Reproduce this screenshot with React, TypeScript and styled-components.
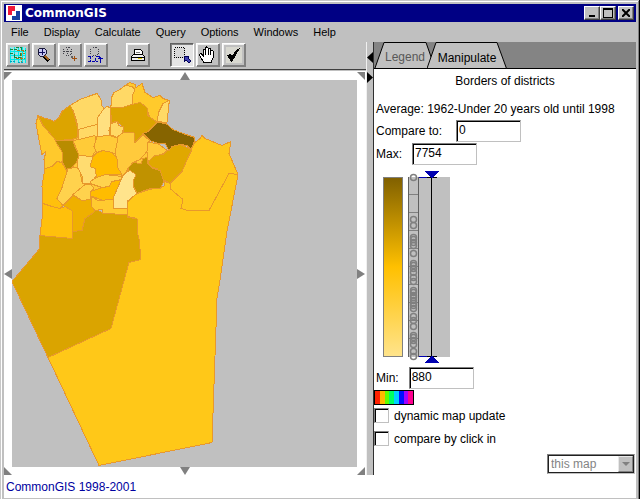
import React from "react";
import styled, { createGlobalStyle, css } from "styled-components";

const GlobalStyle = createGlobalStyle`
  * { box-sizing: border-box; }
  body { margin: 0; background: #c0c0c0; }
  body, button, input, select {
    font-family: "Liberation Sans", Arial, sans-serif;
    font-size: 12px;
    line-height: 14px;
    color: #000;
  }
  button { border: 0; padding: 0; margin: 0; background: none; }
  svg { display: block; }
`;

const raised = css`
  border: 1px solid;
  border-color: #fff #404040 #404040 #fff;
  box-shadow: inset -1px -1px 0 #808080;
`;

const Window = styled.div`
  display: flex;
  flex-direction: column;
  min-height: 100vh;
  padding: 4px;
  background: #c0c0c0;
  box-shadow: inset -1px -1px 0 #000, inset 1px 1px 0 #c8c8c8,
    inset -2px -2px 0 #808080, inset 2px 2px 0 #fff;
`;

const TitleBar = styled.header`
  display: flex;
  align-items: center;
  height: 18px;
  padding: 0 2px;
  background: #000084;
`;

const Title = styled.h1`
  flex: 1;
  margin: 0 0 0 3px;
  font-family: "DejaVu Sans", sans-serif;
  font-size: 12px;
  font-weight: bold;
  color: #fff;
`;

const CaptionButton = styled.button<{ $apart?: boolean }>`
  ${raised}
  display: grid;
  place-items: center;
  width: 16px;
  height: 14px;
  margin-left: ${(p) => (p.$apart ? "2px" : "0")};
  background: #c0c0c0;
`;

const MenuBar = styled.nav`
  display: flex;
  align-items: center;
  gap: 15px;
  height: 20px;
  padding: 0 7px;
`;

const MenuItem = styled.button`
  font-size: 11px;
`;

const Body = styled.main`
  flex: 1;
  display: grid;
  grid-template-columns: minmax(0, 362fr) 8px minmax(0, 262fr);
`;

const MapColumn = styled.section`
  display: flex;
  flex-direction: column;
`;

const Toolbar = styled.div`
  display: flex;
  height: 28px;
  padding: 1px 2px 2px;
  gap: 2px;
  border-bottom: 1px solid #404040;
`;

const ToolGroup = styled.div<{ $before?: number }>`
  display: flex;
  gap: 2px;
  margin-left: ${(p) => p.$before || 0}px;
`;

const ToolButton = styled.button<{ $pressed?: boolean }>`
  width: 24px;
  height: 24px;
  border: 1px solid;
  border-color: ${(p) => (p.$pressed ? "#606060 #fff #fff #606060" : "#fff #808080 #808080 #fff")};
  background: ${(p) => (p.$pressed ? "#e4e4e4" : "#c0c0c0")};
  box-shadow: ${(p) =>
    p.$pressed ? "inset 1px 1px 0 #808080" : "inset -1px -1px 0 #808080, inset 1px 1px 0 #f0f0f0"};
`;

const MapFrame = styled.div`
  flex: 1;
  display: grid;
  grid-template-columns: 8px minmax(0, 1fr) 9px;
  grid-template-rows: 9px minmax(384px, 1fr) 8px;
  margin-top: 1px;
  background: #fff;
  & > svg { place-self: center; }
`;

const PanButton = styled.button<{ $align: string }>`
  display: grid;
  place-items: ${(p) => p.$align};
`;

const MapCanvas = styled.div`
  display: grid;
  background: #c0c0c0;
  & > svg { width: 100%; height: 100%; }
`;

const Divider = styled.div`
  display: flex;
  flex-direction: column;
  align-items: flex-end;
  gap: 9px;
  padding-top: 10px;
  background: #c0c0c0;
  border-left: 1px solid #f0f0f0;
  border-right: 1px solid #303030;
`;

const SidePanel = styled.section`
  display: flex;
  flex-direction: column;
  background: #fff;
`;

const TabStrip = styled.div`
  display: flex;
  height: 27px;
  background: #848484;
  border-bottom: 1px solid #000;
`;

const Tab = styled.button<{ $active?: boolean }>`
  position: relative;
  z-index: ${(p) => (p.$active ? 1 : 0)};
  width: ${(p) => (p.$active ? "80px" : "62px")};
  height: 27px;
  margin-left: ${(p) => (p.$active ? "-9px" : "0")};
  padding: ${(p) => (p.$active ? "5px 0 0" : "2px 0 0")};
  color: ${(p) => (p.$active ? "#000" : "#585858")};
  & > svg { position: absolute; left: 0; top: 0; }
  & > span { position: relative; }
`;

const Content = styled.div`
  display: flex;
  flex-direction: column;
  align-items: flex-start;
  flex: 1;
  padding: 5px 0 1px;
`;

const Heading = styled.h2`
  align-self: center;
  margin: 0 0 14px;
  font-size: 12px;
  font-weight: normal;
`;

const Summary = styled.p`
  margin: 0 0 4px 2px;
`;

const Field = styled.label<{ $gap: number }>`
  display: flex;
  align-items: center;
  gap: ${(p) => p.$gap}px;
  height: 22px;
  margin: 0 0 1px 2px;
`;

const TextBox = styled.input`
  width: 65px;
  height: 22px;
  padding: 0 2px 2px;
  border: 1px solid;
  border-color: #808080 #c0c0c0 #c0c0c0 #808080;
  box-shadow: inset 1px 1px 0 #000;
  background: #fff;
  border-radius: 0;
  outline: 0;
`;

const Chart = styled.svg`
  margin: 4px 0 3px 9px;
`;

const ColourButton = styled.button`
  display: flex;
  width: 40px;
  height: 15px;
  border: 1px solid #000;
  margin-bottom: 3px;
`;

const Swatch = styled.span<{ $colour: string }>`
  flex: 1;
  height: 13px;
  background: ${(p) => p.$colour};
`;

const Check = styled.label`
  display: flex;
  align-items: center;
  gap: 5px;
  margin-bottom: 8px;
`;

const CheckBox = styled.input`
  appearance: none;
  width: 15px;
  height: 15px;
  margin: 0;
  border: 1px solid;
  border-color: #808080 #c0c0c0 #c0c0c0 #808080;
  box-shadow: inset 1px 1px 0 #000;
  background: #fff;
`;

const Choice = styled.div`
  position: relative;
  align-self: flex-end;
  width: 88px;
  height: 20px;
  margin: auto 1px 0 0;
`;

const Select = styled.select`
  appearance: none;
  width: 100%;
  height: 100%;
  padding: 0 20px 0 3px;
  border: 1px solid;
  border-color: #808080 #c0c0c0 #c0c0c0 #808080;
  border-radius: 0;
  box-shadow: inset 0 0 0 1px #202020;
  background: #fff;
  color: #848484;
  opacity: 1;
`;

const SelectArrow = styled.span`
  position: absolute;
  right: 2px;
  top: 2px;
  display: grid;
  place-items: center;
  width: 15px;
  height: 16px;
  background: #c0c0c0;
  border: 1px solid;
  border-color: #e8e8e8 #808080 #808080 #e8e8e8;
  pointer-events: none;
`;

const StatusBar = styled.footer`
  height: 23px;
  padding: 5px 2px;
  background: #fff;
  color: #0000a0;
`;

const districts: [string, string][] = [
  ["#ffc818", "238,173 227,230 219,285 217,297 212,441 99,464 48,356 111,327 129,261 141,258 139,237 137,230 137,217 127,215 127,201 137,192 150,188 164,185 165,180 170,182 170,187 183,198 181,207 188,209 209,209 229,172"],
  ["#daa400", "40,234 72,237 72,230 82,229 85,217 97,208 103,212 127,213 127,216 137,217 137,230 139,237 141,258 129,261 111,327 48,356 12,280 39,248"],
  ["#ffc81c", "191,148 195,141 200,137 202,134 205,137 222,144 231,140 229,152 238,173 229,172 209,209 188,209 181,207 183,198 170,187 170,182 182,170 188,155"],
  ["#dca400", "38,114 45,117 50,118 54,120 59,116 62,110 70,104 73,109 77,124 78,136 72,138 56,139 43,124"],
  ["#ffd966", "70,104 80,98 91,94 97,92 101,98 101,103 104,107 97,117 97,123 78,128 77,121 73,109"],
  ["#ffd966", "78,128 97,123 97,136 79,138"],
  ["#ffe080", "104,107 107,105 110,106 111,122 109,129 110,134 97,135 97,117"],
  ["#ffd966", "111,104 111,97 114,91 120,88 125,84 132,85 135,88 132,95 132,103 122,106 110,106"],
  ["#ffca2c", "125,84 130,81 135,83 136,86 142,82 145,91 153,96 160,94 163,97 169,99 163,102 157,120 150,117 147,108 145,106 140,101 132,103 132,95 135,88 132,85"],
  ["#ffd966", "169,99 169,102 167,121 157,120 159,110 163,102"],
  ["#dca400", "110,106 122,106 132,103 140,101 147,106 148,114 157,121 148,130 143,132 140,136 135,141 134,131 123,131 124,126 117,120 112,121"],
  ["#ffd966", "111,122 117,120 119,124 124,126 122,132 117,136 110,133"],
  ["#ffca3c", "118,135 123,131 134,131 135,141 140,136 143,134 150,139 148,141 147,150 140,158 133,161 128,168 122,175 117,165 117,157 115,152"],
  ["#ffca3c", "148,141 158,142 167,149 162,153 155,155 148,160 147,150"],
  ["#e0a800", "148,160 155,154 163,153 169,148 172,145 180,143 192,148 188,156 182,170 170,182 163,178 157,167 150,165"],
  ["#c09200", "128,167 133,161 141,162 143,157 147,156 148,162 153,167 160,169 164,180 160,187 150,187 137,192 133,183 134,174"],
  ["#866400", "143,132 148,130 157,121 166,122 173,128 183,132 195,136 194,141 191,148 187,144 180,143 172,145 169,149 165,142 158,142 150,139"],
  ["#ffc92c", "38,114 43,124 56,139 63,151 62,161 57,160 52,165 45,167 44,158 46,150 42,153 38,133 36,122"],
  ["#b88c00", "55,139 73,139 75,145 79,154 77,160 73,165 70,167 68,171 62,160 63,152"],
  ["#ffc00c", "45,167 52,165 57,160 62,161 68,172 62,186 57,197 63,204 60,207 52,205 43,202 42,185"],
  ["#ffc00c", "43,202 52,205 60,207 65,205 72,209 72,237 40,234 42,218"],
  ["#ffd24d", "68,167 77,166 80,170 82,180 85,183 73,195 63,204 57,197 62,186"],
  ["#ffdc70", "77,160 79,154 93,155 90,165 96,167 96,175 90,182 83,182 82,174 78,167"],
  ["#ffcb38", "73,139 79,138 95,134 97,147 92,155 79,154"],
  ["#ffcb38", "97,135 110,134 118,137 115,152 108,150 97,152 94,145"],
  ["#ffbc00", "90,165 93,155 97,151 103,149 112,151 117,157 117,165 122,173 105,173 97,178 95,167"],
  ["#ffd24d", "90,180 97,176 105,173 122,175 122,178 112,180 109,185 102,186 90,182"],
  ["#ffbc00", "90,190 103,186 109,185 112,180 122,178 113,198 103,199 90,194"],
  ["#ffd24d", "73,193 85,183 91,183 94,187 90,191 90,198 82,199"],
  ["#efb000", "63,204 73,194 82,199 91,198 92,205 95,210 85,217 82,229 72,230 72,209"],
  ["#ffcb30", "91,195 98,199 113,198 113,207 127,207 127,213 103,212 102,208 95,209 91,204"],
  ["#ffe48c", "122,176 127,170 130,169 136,173 133,180 133,185 137,192 127,200 127,207 113,207 113,197"],
];

const samples = [176, 218, 224, 236, 238, 241, 244, 252, 262, 264, 267, 271, 276, 280, 289, 291, 294, 296, 299, 302, 304, 307, 315, 319, 325, 334, 336, 339, 343, 350, 355];
const ticks = [193, 211, 229, 247, 265, 283, 301, 319, 337];
const rainbow = ["#ff2000", "#ffb800", "#60ff00", "#00ff60", "#00d0ff", "#0010ff", "#a000ff", "#ff0090"];

function Icon({ children }: { children: React.ReactNode }) {
  return (
    <svg width="22" height="22" viewBox="1 1 22 22" fill="none" shapeRendering="crispEdges" aria-hidden="true">
      {children}
    </svg>
  );
}

const GridIcon = () => (
  <Icon>
    <rect x="4" y="4" width="16" height="16" fill="#9ce4e4" />
    <path d="M4 8.5h16M4 12.5h16M4 16.5h16M8.5 4v16M12.5 4v16M16.5 4v16M4.5 5v15M19.5 5v15" stroke="#00e8e8" />
    <path d="M4 6.5h6v-2h5v3h5M4 10.5h4v4h6v-5" stroke="#108840" strokeDasharray="3 1" />
    <path d="M11 7.5h6v3h3M15.5 10v9M10 15.5h9" stroke="#a08020" strokeDasharray="3 1" />
    <path d="M4 18.5h5M12 19.5h5" stroke="#00a0c0" strokeDasharray="2 1" />
  </Icon>
);

const ZoomIcon = () => (
  <Icon>
    <path d="M12 13l5 5" stroke="#000" strokeWidth="4" />
    <path d="M13 13l4 4" stroke="#a06020" strokeWidth="2" />
    <path d="M8 5h4l2 2v4l-2 2H8l-2-2V7z" fill="#c8c8f0" stroke="#181838" />
    <path d="M10.5 6v6M7 9.5h6" stroke="#101060" />
  </Icon>
);

const ZoomPointIcon = () => (
  <Icon>
    <path d="M7.5 4.5h4l2 2v4l-2 2h-4l-2-2v-4z" stroke="#404048" strokeDasharray="1 1" />
    <path d="M9.5 6v6M6 8.5h7" stroke="#404048" strokeDasharray="1 1" />
    <path d="M13 13h2v2h-2z" fill="#606060" />
    <path d="M16.5 13v5M14 15.5h5" stroke="#a05010" />
  </Icon>
);

const ZoomAreaIcon = () => (
  <Icon>
    <path d="M8.5 4.5h4l2 2v4l-2 2h-4l-2-2v-4z" stroke="#404048" strokeDasharray="1 1" />
    <path d="M4 13.5h5M6.5 13v6M4 18.5h10M11.5 15v4" stroke="#0000b0" strokeDasharray="3 1" />
    <path d="M11.5 13.5h4l1 2v4M14 15.5h5" stroke="#0000b0" />
  </Icon>
);

const PrintIcon = () => (
  <Icon>
    <path d="M8.5 12V6.5h6l2 2V12" fill="#fff" stroke="#000" />
    <path d="M10 9.5h4" stroke="#808080" />
    <path d="M5.5 17.5v-4l2-2h9l2 2v4z" fill="#f0f0f0" stroke="#000" />
    <path d="M6 14.5h12" stroke="#000" />
    <path d="M12 15.5h4" stroke="#e0d000" />
  </Icon>
);

const SelectIcon = () => (
  <Icon>
    <rect x="4.5" y="4.5" width="10" height="10" fill="#d8d8d8" stroke="#000" strokeDasharray="1 1" />
    <path d="M14 13h5l-1 2 3 3-2 2-3-3-2 2z" fill="#4040b0" stroke="#000058" />
  </Icon>
);

const HandIcon = () => (
  <Icon>
    <path
      d="M8 19.5L4.5 14.5l-1-3 1.500-1 2 2V7l1-1 1.500 1V5l1-1L12 5v1l1-1 1.500 1v2L16 7l1 1v7l-2 4.500z"
      fill="#fff"
      stroke="#000"
    />
    <path d="M9.5 7v5M12.500 6v6M14.500 8v4" stroke="#000" />
  </Icon>
);

const CheckIcon = () => (
  <Icon>
    <rect x="4" y="4" width="16" height="16" fill="#d8d8d0" />
    <path d="M5 12l4-1 1 2 5-7 3-1-8 14H9z" fill="#000" />
  </Icon>
);

function Arrow({ w, h, points, fill = "#808080" }: { w: number; h: number; points: string; fill?: string }) {
  return (
    <svg width={w} height={h} viewBox={`0 0 ${w} ${h}`} aria-hidden="true">
      <polygon points={points} fill={fill} />
    </svg>
  );
}

function DistrictMap() {
  return (
    <MapCanvas>
      <svg viewBox="12 80 345 384" shapeRendering="crispEdges" role="img" aria-label="Borders of districts">
        <polygon fill="#ffcb30" points="38,114 70,104 97,92 111,104 132,81 169,99 194,140 170,185 127,215 43,230" opacity="0" />
        <polygon fill="#ffca38" points="56,137 97,125 150,135 148,180 130,200 80,212 60,200" />
        {districts.map(([fill, points]) => (
          <polygon key={points} fill={fill} points={points} stroke="#e8982c" strokeLinejoin="round" />
        ))}
      </svg>
    </MapCanvas>
  );
}

function ValueScale() {
  return (
    <Chart width="70" height="194" viewBox="383 169 70 194" shapeRendering="crispEdges" role="img" aria-label="Value scale">
      <defs>
        <linearGradient id="scale" x1="0" y1="0" x2="0" y2="1">
          <stop offset="0" stopColor="#806000" />
          <stop offset="0.5" stopColor="#ffc000" />
          <stop offset="1" stopColor="#ffe48c" />
        </linearGradient>
      </defs>
      <rect x="383.500" y="176.500" width="19" height="179" fill="url(#scale)" stroke="#808080" />
      <rect x="408" y="176" width="42" height="180" fill="#c0c0c0" />
      <path d="M408.500 176v180M418.500 176v180" stroke="#606060" />
      {ticks.map((y) => (
        <path key={y} d={`M409 ${y}.500h9`} stroke="#808080" />
      ))}
      <g shapeRendering="auto" fill="none" stroke="#808080" strokeWidth="1.500">
        {samples.map((y) => (
          <circle key={y} cx="413.500" cy={y + 0.5} r="3" />
        ))}
      </g>
      <path d="M419 176.500h8M419 355.500h8" stroke="#0000b0" />
      <path d="M431.500 176v180M427 176.500h10M427 355.500h10" stroke="#000" />
      <path d="M424 170h16l-8 7zM424 362h16l-8-7z" fill="#0000b0" />
    </Chart>
  );
}

export default function App() {
  return (
    <>
      <GlobalStyle />
      <Window>
        <TitleBar>
          <svg width="16" height="16" viewBox="0 0 16 16" aria-hidden="true">
            <path d="M0 0h16v16H0z" fill="#fff" />
            <path d="M2 1h7v5H6v4H2z" fill="#f01838" />
            <path d="M10 6h4v9H6v-4h4z" fill="#1840a0" />
          </svg>
          <Title>CommonGIS</Title>
          <CaptionButton aria-label="Minimize">
            <svg width="10" height="10"><path d="M2 7h6v2H2z" /></svg>
          </CaptionButton>
          <CaptionButton aria-label="Maximize">
            <svg width="10" height="10"><path d="M0 0h10v10H0zM1 2v7h8V2z" fillRule="evenodd" /></svg>
          </CaptionButton>
          <CaptionButton aria-label="Close" $apart>
            <svg width="8" height="8"><path d="M0 0l8 8M8 0L0 8" stroke="#000" strokeWidth="2" /></svg>
          </CaptionButton>
        </TitleBar>
        <MenuBar>
          {["File", "Display", "Calculate", "Query", "Options", "Windows", "Help"].map((m) => (
            <MenuItem key={m}>{m}</MenuItem>
          ))}
        </MenuBar>
        <Body>
          <MapColumn>
            <Toolbar>
              <ToolGroup>
                <ToolButton aria-label="Whole map"><GridIcon /></ToolButton>
                <ToolButton aria-label="Zoom in"><ZoomIcon /></ToolButton>
                <ToolButton aria-label="Zoom to point"><ZoomPointIcon /></ToolButton>
                <ToolButton aria-label="Undo zoom"><ZoomAreaIcon /></ToolButton>
              </ToolGroup>
              <ToolGroup $before={16}>
                <ToolButton aria-label="Print"><PrintIcon /></ToolButton>
              </ToolGroup>
              <ToolGroup $before={18}>
                <ToolButton aria-label="Select area" $pressed><SelectIcon /></ToolButton>
                <ToolButton aria-label="Pan"><HandIcon /></ToolButton>
                <ToolButton aria-label="Pick object"><CheckIcon /></ToolButton>
              </ToolGroup>
            </Toolbar>
            <MapFrame>
              <PanButton aria-label="North-west" $align="end start"><Arrow w={8} h={8} points="0,0 8,0 0,8" /></PanButton>
              <PanButton aria-label="North" $align="end center"><Arrow w={10} h={8} points="5,0 10,8 0,8" /></PanButton>
              <PanButton aria-label="North-east" $align="end start"><Arrow w={8} h={8} points="0,0 8,0 8,8" /></PanButton>
              <PanButton aria-label="West" $align="center start"><Arrow w={8} h={10} points="8,0 8,10 0,5" /></PanButton>
              <DistrictMap />
              <PanButton aria-label="East" $align="center start"><Arrow w={8} h={10} points="0,0 8,5 0,10" /></PanButton>
              <PanButton aria-label="South-west" $align="end start"><Arrow w={8} h={8} points="0,0 8,8 0,8" /></PanButton>
              <PanButton aria-label="South" $align="end center"><Arrow w={10} h={8} points="0,0 10,0 5,8" /></PanButton>
              <PanButton aria-label="South-east" $align="end start"><Arrow w={8} h={8} points="8,0 8,8 0,8" /></PanButton>
            </MapFrame>
          </MapColumn>
          <Divider>
            <button aria-label="Collapse left"><Arrow w={6} h={11} points="6,0 6,11 0,5.500" fill="#000" /></button>
            <button aria-label="Collapse right"><Arrow w={6} h={11} points="0,0 6,5.500 0,11" fill="#000" /></button>
          </Divider>
          <SidePanel>
            <TabStrip role="tablist">
              <Tab role="tab" aria-selected="false">
                <svg width="62" height="26" viewBox="0 0 62 26">
                  <path d="M1 26L10 .5h42L61 26" fill="#c0c0c0" stroke="#000" />
                </svg>
                <span>Legend</span>
              </Tab>
              <Tab role="tab" aria-selected="true" $active>
                <svg width="80" height="27" viewBox="0 0 80 27">
                  <path d="M0 26.500L9 .5h61L79.500 26.500z" fill="#c0c0c0" stroke="#000" />
                </svg>
                <span>Manipulate</span>
              </Tab>
            </TabStrip>
            <Content>
              <Heading>Borders of districts</Heading>
              <Summary>Average: 1962-Under 20 years old until 1998</Summary>
              <Field $gap={14}>Compare to:<TextBox defaultValue="0" /></Field>
              <Field $gap={10}>Max:<TextBox defaultValue="7754" /></Field>
              <ValueScale />
              <Field $gap={10}>Min:<TextBox defaultValue="880" /></Field>
              <ColourButton aria-label="Change colours">
                {rainbow.map((c) => <Swatch key={c} $colour={c} />)}
              </ColourButton>
              <Check><CheckBox type="checkbox" />dynamic map update</Check>
              <Check><CheckBox type="checkbox" />compare by click in</Check>
              <Choice>
                <Select aria-label="Compare by click in" disabled>
                  <option>this map</option>
                </Select>
                <SelectArrow>
                  <Arrow w={8} h={4} points="0,0 8,0 4,4" />
                </SelectArrow>
              </Choice>
            </Content>
          </SidePanel>
        </Body>
        <StatusBar>CommonGIS 1998-2001</StatusBar>
      </Window>
    </>
  );
}
